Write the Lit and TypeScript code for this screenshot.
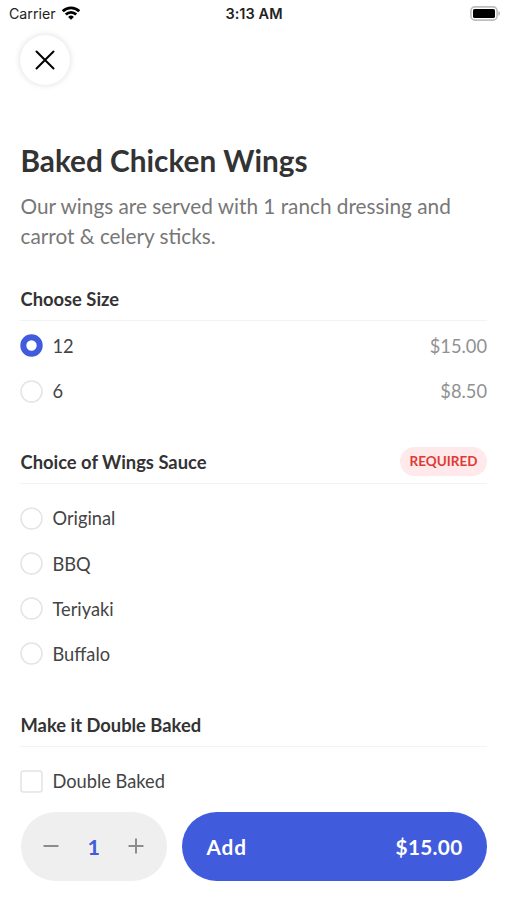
import { LitElement, html, css, svg } from "lit";
import { customElement, property, state } from "lit/decorators.js";

@customElement("status-bar")
class StatusBar extends LitElement {
  static styles = css`
    :host { display: grid; grid-template-columns: 1fr auto 1fr; align-items: center; height: 28px; padding: 0 7px 0 9px; font: 14.2px/28px Inter, sans-serif; color: #222; }
    .left { display: flex; align-items: center; gap: 6px; }
    .time { font-weight: 600; font-size: 14.5px; letter-spacing: 0.05px; margin-left: -1px; }
    .right { display: flex; justify-content: flex-end; }
    svg { display: block; }
    .wifi { margin-top: -3px; }
    .battery { margin-top: -2px; }
  `;
  render() {
    return html`
      <div class="left"><span>Carrier</span>
        <svg class="wifi" width="18" height="14" viewBox="0 0 18 14" fill="none" stroke="#000" stroke-width="2.8">
          <path d="M0.8 5.2A11.6 11.6 0 0 1 17.2 5.2" />
          <path d="M3.8 8.5A7.3 7.3 0 0 1 14.2 8.5" />
          <path d="M9 13.8L6.1 10.9A4.1 4.1 0 0 1 11.9 10.9Z" fill="#000" stroke="none" />
        </svg>
      </div>
      <div class="time">3:13 AM</div>
      <div class="right">
        <svg class="battery" width="30" height="15" viewBox="0 0 30 15">
          <rect x="0.9" y="0.9" width="26.2" height="13.2" rx="4" fill="#fff" stroke="#bdbdbd" stroke-width="1.6" />
          <rect x="3" y="2.9" width="22" height="9.2" rx="1.6" fill="#000" />
          <path d="M28.3 5.2Q30.5 5.8 30.5 7.5T28.3 9.8Z" fill="#bdbdbd" />
        </svg>
      </div>`;
  }
}

@customElement("option-row")
class OptionRow extends LitElement {
  @property() label = "";
  @property() price = "";
  @property() kind = "radio";
  @property({ type: Boolean }) checked = false;
  static styles = css`
    :host { display: flex; align-items: center; height: 45.2px; font-size: 18.25px; color: #444; }
    svg { display: block; width: 23px; height: 23px; margin-right: 9.5px; fill: #fff; stroke: #e4e4e4; stroke-width: 1.5; }
    .on { stroke: #405cdd; stroke-width: 6; }
    .label { flex: 1; }
    .price { color: #919191; }
  `;
  render() {
    const mark =
      this.kind === "checkbox"
        ? svg`<rect x="1" y="1" width="21" height="21" rx="2.5" />`
        : this.checked
          ? svg`<circle class="on" cx="11.5" cy="11.5" r="8.2" />`
          : svg`<circle cx="11.5" cy="11.5" r="10.5" />`;
    return html`<svg viewBox="0 0 23 23">${mark}</svg>
      <span class="label">${this.label}</span>
      ${this.price ? html`<span class="price">${this.price}</span>` : ""}`;
  }
}

@customElement("app-root")
class AppRoot extends LitElement {
  @state() quantity = 1;
  static styles = css`
    :host { display: flex; flex-direction: column; height: 900px; overflow: hidden; background: #fff; font-family: Lato, sans-serif; color: #333; }
    .close { box-sizing: border-box; width: 50px; height: 50px; margin: 7px 0 0 20px; padding: 15px; border: 0; border-radius: 50%; background: #fff; box-shadow: 0 0 6px rgba(0, 0, 0, 0.14); flex: none; }
    .close svg, .step svg { display: block; }
    main { flex: 1; min-height: 0; overflow: hidden; padding: 0 20px; }
    h1 { margin: 58px 0 0 0.5px; font-size: 29.75px; line-height: 36px; font-weight: 700; }
    .desc { margin: 12.4px 0 0 0.5px; font-size: 20.78px; line-height: 29.5px; color: #777; }
    section { margin-top: 25px; }
    .options { padding-top: 12px; }
    .sizes { margin-top: 26px; }
    .sizes .options { padding-top: 2px; }
    .head { display: flex; align-items: center; justify-content: space-between; height: 41px; padding: 3px 0 0 0.5px; border-bottom: 1.5px solid #f3f3f3; font-size: 18.35px; font-weight: 700; }
    .sizes .head { height: 43px; padding-top: 1px; }
    .badge { height: 29px; padding: 0 9.5px; border-radius: 15px; background: #ffe9ea; color: #e03a36; font-size: 13.5px; line-height: 29px; margin-bottom: 2px; }
    footer { display: flex; gap: 15px; height: 88px; padding: 17px 20px 0 20.5px; background: #fff; flex: none; }
    .stepper { display: flex; align-items: center; justify-content: space-between; box-sizing: border-box; width: 146.5px; height: 68.5px; padding: 0 22.5px; border-radius: 35px; background: #efefef; }
    .step { padding: 0; border: 0; background: none; }
    .qty { color: #405cdd; font-size: 21.5px; font-weight: 700; padding-top: 1px; }
    .add { flex: 1; display: flex; align-items: center; justify-content: space-between; height: 68.5px; padding: 1px 24.5px 0; border: 0; border-radius: 35px; background: #405cdd; color: #fff; font: 700 20.75px Lato, sans-serif; letter-spacing: 0.3px; }
    .verb { letter-spacing: 0.9px; }
  `;
  render() {
    return html`
      <status-bar></status-bar>
      <button class="close" aria-label="Close">
        <svg width="20" height="20" viewBox="0 0 20 20" stroke="#000" stroke-width="2" stroke-linecap="round"><path d="M1.5 1.5L18.5 18.5M18.5 1.5L1.5 18.5" /></svg>
      </button>
      <main>
        <h1>Baked Chicken Wings</h1>
        <div class="desc">Our wings are served with 1 ranch dressing and carrot &amp; celery sticks.</div>
        <section class="sizes">
          <div class="head">Choose Size</div>
          <div class="options">
            <option-row label="12" price="$15.00" checked></option-row>
            <option-row label="6" price="$8.50"></option-row>
          </div>
        </section>
        <section>
          <div class="head">Choice of Wings Sauce<span class="badge">REQUIRED</span></div>
          <div class="options">
            ${["Original", "BBQ", "Teriyaki", "Buffalo"].map((l) => html`<option-row label=${l}></option-row>`)}
          </div>
        </section>
        <section>
          <div class="head">Make it Double Baked</div>
          <div class="options"><option-row kind="checkbox" label="Double Baked"></option-row></div>
        </section>
      </main>
      <footer>
        <div class="stepper">
          <button class="step" aria-label="Decrease" @click=${() => (this.quantity = Math.max(1, this.quantity - 1))}>
            <svg width="16" height="16" viewBox="0 0 16 16" stroke="#8c8c8c" stroke-width="2"><path d="M0.5 8H15.5" /></svg>
          </button>
          <span class="qty">${this.quantity}</span>
          <button class="step" aria-label="Increase" @click=${() => (this.quantity += 1)}>
            <svg width="16" height="16" viewBox="0 0 16 16" stroke="#8c8c8c" stroke-width="2"><path d="M0.5 8H15.5M8 0.5V15.5" /></svg>
          </button>
        </div>
        <button class="add"><span class="verb">Add</span><span>$15.00</span></button>
      </footer>`;
  }
}
